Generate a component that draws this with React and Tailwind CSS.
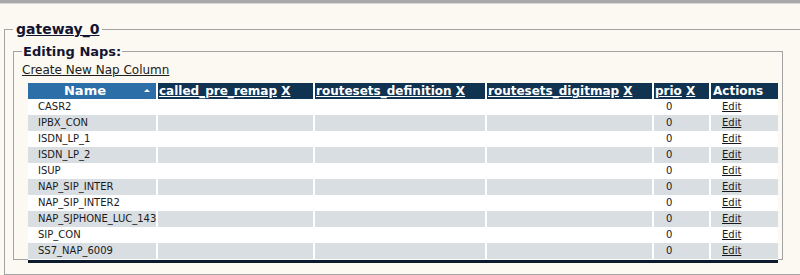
const rows = [
  'CASR2',
  'IPBX_CON',
  'ISDN_LP_1',
  'ISDN_LP_2',
  'ISUP',
  'NAP_SIP_INTER',
  'NAP_SIP_INTER2',
  'NAP_SJPHONE_LUC_143',
  'SIP_CON',
  'SS7_NAP_6009',
]

const cols = [
  { label: 'called_pre_remap', w: 'w-[155px]' },
  { label: 'routesets_definition', w: 'w-[170px]' },
  { label: 'routesets_digitmap', w: 'w-[165px]' },
  { label: 'prio', w: 'w-[55px]' },
]

export default function App() {
  return (
    <div className="w-[800px] h-[275px] overflow-hidden bg-[#fbf9f1] font-['DejaVu_Sans',Verdana,sans-serif] text-[#111]">
      <div className="h-[4px] bg-[#a8a8a8] border-b border-[#d6d6d6]" />
      <fieldset className="ml-[4px] mt-[17px] h-[254px] border border-r-0 border-[#a3a3a3] pl-[8px] pr-0">
        <legend className="px-[3px] text-[14px] font-bold underline leading-[16px] text-[#141432]">
          gateway_0
        </legend>
        <fieldset className="mt-[7px] w-[770px] h-[216px] border border-[#a3a3a3] pl-[8px]">
          <legend className="px-[1px] text-[13px] font-bold leading-[15px] text-[#141432]">
            Editing Naps:
          </legend>
          <div className="text-[12px] underline leading-[15px] text-[#202020] mt-[4px]">
            Create New Nap Column
          </div>
          <div className="ml-[6px] mt-[5px] w-[750px] bg-white">
            <div className="flex gap-[2px] h-[16px] text-white text-[12px] font-bold leading-[16px]">
              <div className="w-[128px] bg-[#2b6ea8] flex items-center relative justify-center">
                <span className="mr-[14px] text-[13px]">Name</span>
                <span className="absolute right-[6px] top-[6px] w-0 h-0 border-l-[3px] border-r-[3px] border-b-[3px] border-l-transparent border-r-transparent border-b-white" />
              </div>
              {cols.map((c) => (
                <div key={c.label} className={`${c.w} bg-[#0f3351] pl-[1px] whitespace-nowrap overflow-hidden`}>
                  <span className="underline">{c.label}</span> <span className="underline">X</span>
                </div>
              ))}
              <div className="w-[67px] bg-[#0f3351] pl-[2px]">Actions</div>
            </div>
            {rows.map((r, i) => (
              <div key={r} className="flex gap-[2px] h-[16px] text-[10px] leading-[16px] text-[#1a1a1a]">
                {[
                  { w: 'w-[128px]', t: r },
                  { w: 'w-[155px]', t: '' },
                  { w: 'w-[170px]', t: '' },
                  { w: 'w-[165px]', t: '' },
                  { w: 'w-[55px]', t: '0', pad: 'pl-[12px]' },
                ].map((c, j) => (
                  <div key={j} className={`${c.w} ${c.pad || 'pl-[10px]'} ${i % 2 ? 'bg-[#d9dee3]' : 'bg-white'}`}>
                    {c.t}
                  </div>
                ))}
                <div className={`w-[67px] pl-[11px] ${i % 2 ? 'bg-[#d9dee3]' : 'bg-white'}`}>
                  <span className="underline">Edit</span>
                </div>
              </div>
            ))}
            <div className="h-[3px] bg-[#0b1a2c] mt-[1px]" />
          </div>
        </fieldset>
      </fieldset>
    </div>
  )
}
